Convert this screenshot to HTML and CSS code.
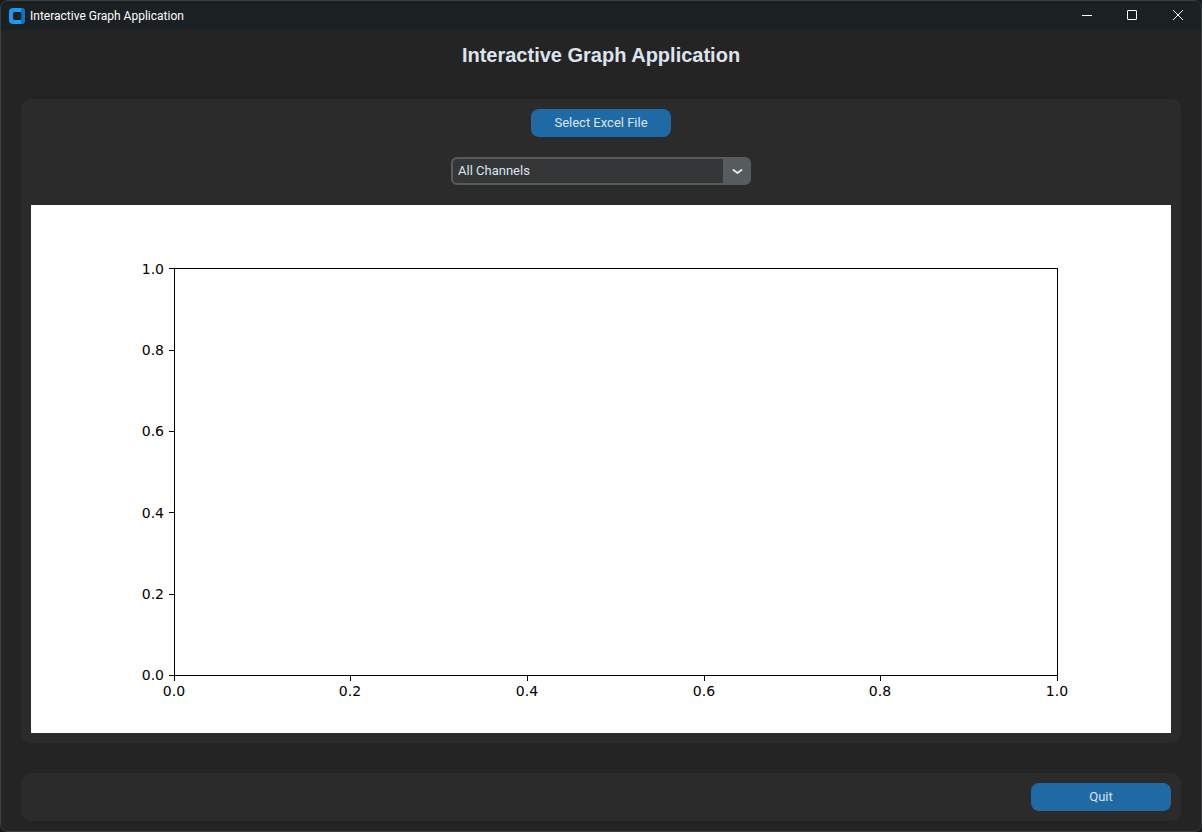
FILE: index.html
```html
<!DOCTYPE html>
<html lang="en">
<head>
<meta charset="utf-8">
<title>Interactive Graph Application</title>
<link rel="stylesheet" href="styles.css">
</head>
<body>
<div class="window">
  <header class="titlebar">
    <svg class="app-icon" viewBox="0 0 16 16" aria-hidden="true">
      <rect width="16" height="16" rx="4" fill="#1a9af5"/>
      <path d="M12 0a4 4 0 0 1 4 4v8a4 4 0 0 1-4 4z" fill="#1470bd"/>
      <rect x="4" y="4" width="9" height="8" rx="2" fill="#0f5a9c"/>
      <rect x="4" y="4" width="8" height="8" rx="2" fill="#1b2022"/>
    </svg>
    <span class="titlebar-text">Interactive Graph Application</span>
    <div class="window-controls">
      <button class="window-button" aria-label="Minimize"><svg viewBox="0 0 12 12"><path d="M2 5.5h10"/></svg></button>
      <button class="window-button" aria-label="Maximize"><svg viewBox="0 0 12 12"><rect x="1.5" y="0.5" width="9" height="9" rx="0.5"/></svg></button>
      <button class="window-button" aria-label="Close"><svg viewBox="0 0 12 12"><path d="M1 0l10 10M11 0L1 10"/></svg></button>
    </div>
  </header>
  <main class="content">
    <h1 class="heading">Interactive Graph Application</h1>
    <section class="panel">
      <button class="button">Select Excel File</button>
      <div class="combo">
        <select class="combo-select" aria-label="Channel">
          <option>All Channels</option>
        </select>
        <svg class="combo-arrow" viewBox="0 0 28 28" aria-hidden="true"><path d="M10.5 13l4 3 4-3"/></svg>
      </div>
      <div class="figure">
        <svg class="chart" viewBox="0 0 1140 528" role="img" aria-label="Empty graph">
          <rect class="axis" x="143.5" y="63.5" width="883" height="407"/>
          <path class="axis" d="M138 63.5h5M138 145.5h5M138 226.5h5M138 307.5h5M138 389.5h5M138 470.5h5"/>
          <path class="axis" d="M143.5 471v5M319.5 471v5M496.5 471v5M673.5 471v5M849.5 471v5M1026.5 471v5"/>
          <g class="labels-y">
            <text x="133" y="69">1.0</text>
            <text x="133" y="150">0.8</text>
            <text x="133" y="231">0.6</text>
            <text x="133" y="313">0.4</text>
            <text x="133" y="394">0.2</text>
            <text x="133" y="475">0.0</text>
          </g>
          <g class="labels-x">
            <text x="143" y="491">0.0</text>
            <text x="319" y="491">0.2</text>
            <text x="496" y="491">0.4</text>
            <text x="673" y="491">0.6</text>
            <text x="849" y="491">0.8</text>
            <text x="1026" y="491">1.0</text>
          </g>
        </svg>
      </div>
    </section>
    <footer class="footer">
      <button class="button">Quit</button>
    </footer>
  </main>
</div>
</body>
</html>
```
FILE: styles.css
```css
* {
  box-sizing: border-box;
}

body {
  margin: 0;
  background: #171c20;
  font-family: Roboto, "Liberation Sans", sans-serif;
  font-size: 13px;
  color: #dce4ee;
}

.window {
  display: flex;
  flex-direction: column;
  height: 100vh;
  border: 1px solid #3a3f41;
  border-radius: 8px;
  background: #242424;
  overflow: hidden;
}

.titlebar {
  display: flex;
  align-items: center;
  flex: none;
  height: 29px;
  padding-left: 8px;
  background: #1b2022;
}

.app-icon {
  width: 16px;
  height: 16px;
  margin-right: 5px;
}

.titlebar-text {
  font-family: Roboto, "Open Sans", sans-serif;
  font-size: 12px;
  line-height: 16px;
  color: #fff;
}

.window-controls {
  display: flex;
  margin-left: auto;
}

.window-button {
  display: flex;
  align-items: center;
  justify-content: center;
  width: 46px;
  height: 29px;
  padding: 0;
  border: 0;
  background: none;
}

.window-button svg {
  width: 12px;
  height: 12px;
  fill: none;
  stroke: #fff;
}

.content {
  display: flex;
  flex-direction: column;
  flex: 1;
  min-height: 0;
  padding: 11px 20px 10px;
}

.heading {
  margin: 0 0 30px;
  font: bold 20px/28px "Liberation Sans", Arial, sans-serif;
  text-align: center;
}

.panel {
  display: flex;
  flex-direction: column;
  align-items: center;
  flex: 1;
  min-height: 0;
  gap: 20px;
  padding: 10px;
  border-radius: 10px;
  background: #2b2b2b;
}

.button {
  flex: none;
  width: 140px;
  height: 28px;
  padding: 0 0 2px;
  border: 0;
  border-radius: 8px;
  background: #1f6aa5;
  font: inherit;
  color: inherit;
}

.combo {
  position: relative;
  flex: none;
  width: 300px;
  height: 28px;
}

.combo-select {
  width: 100%;
  height: 100%;
  padding: 0 32px 2px 5px;
  border: 2px solid #565b5e;
  border-radius: 6px;
  background: linear-gradient(#565b5e, #565b5e) right / 26px 100% no-repeat #343638;
  font: inherit;
  color: inherit;
  appearance: none;
}

.combo-arrow {
  position: absolute;
  top: 0;
  right: 0;
  width: 28px;
  height: 28px;
  fill: none;
  stroke: #dce4ee;
  stroke-width: 2;
  stroke-linecap: round;
  stroke-linejoin: round;
  pointer-events: none;
}

.figure {
  align-self: stretch;
  flex: 1;
  min-height: 0;
  background: #fff;
}

.chart {
  display: block;
  width: 100%;
  height: 100%;
  font-family: "DejaVu Sans", sans-serif;
  font-size: 14px;
}

.axis {
  fill: none;
  stroke: #000;
}

.labels-y {
  text-anchor: end;
}

.labels-x {
  text-anchor: middle;
}

.footer {
  display: flex;
  justify-content: flex-end;
  flex: none;
  margin-top: 30px;
  padding: 10px;
  border-radius: 10px;
  background: #2b2b2b;
}
```
